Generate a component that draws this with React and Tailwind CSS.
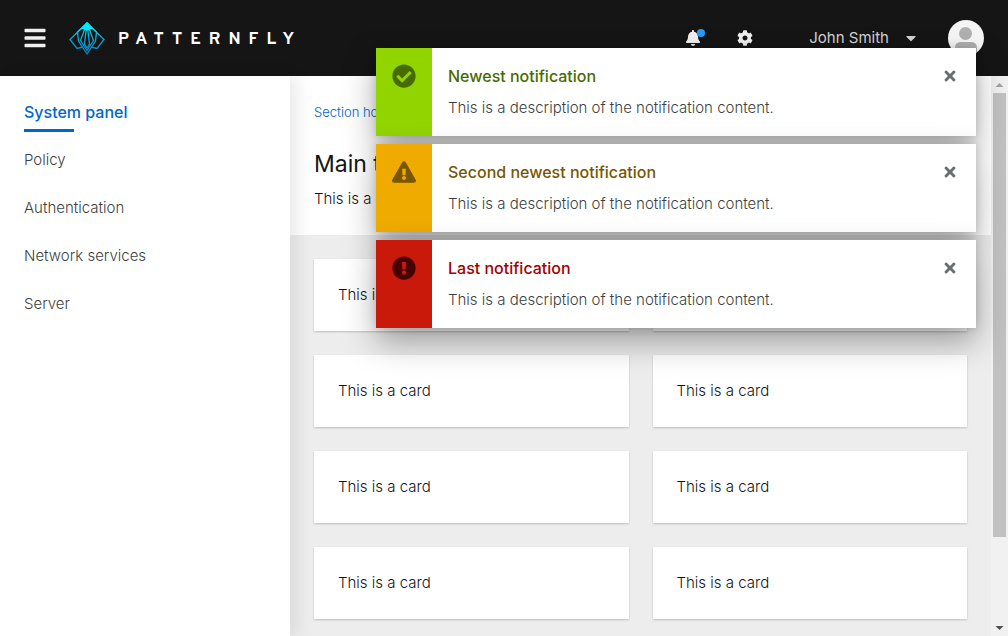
import { FaBars, FaBell, FaCog, FaCaretDown, FaCheckCircle, FaExclamationTriangle, FaExclamationCircle, FaTimes } from "react-icons/fa";

const navItems = ["Policy", "Authentication", "Network services", "Server"];
const cards = Array.from({ length: 8 }, (_, i) => i);

const alerts = [
  { title: "Newest notification", Icon: FaCheckCircle, band: "bg-[#92d400] text-[#486b00]", color: "text-[#486b00]" },
  { title: "Second newest notification", Icon: FaExclamationTriangle, band: "bg-[#f0ab00] text-[#795600]", color: "text-[#795600]" },
  { title: "Last notification", Icon: FaExclamationCircle, band: "bg-[#c9190b] text-[#470000]", color: "text-[#a30000]" },
];

function Logo() {
  return (
    <svg viewBox="0 0 36 33" className="h-[33px] w-9" fill="none" stroke="url(#logo)" strokeWidth="1.3" aria-hidden="true">
      <defs>
        <linearGradient id="logo" x1="0" y1="0" x2="0" y2="33" gradientUnits="userSpaceOnUse">
          <stop offset="0" stopColor="#00f0ff" />
          <stop offset="0.4" stopColor="#08b4dc" />
          <stop offset="1" stopColor="#0d78b8" />
        </linearGradient>
      </defs>
      <path d="M18 1 L1 17.500 L8 26.500 L14 25 M18 1 L35 17.500 L28 26.500 L22 25" />
      <path d="M18 1 L8.500 10 L9.500 19 L18 32 L26.500 19 L27.500 10 Z" />
      <path d="M18 1 L11.500 18.500 L18 28.500 L24.500 18.500 Z" />
      <path d="M18 1 L15.500 22 L18 26 L20.500 22 Z" />
      <path d="M18 0.500 L12 6.500 L18 8.500 L24 6.500 Z" fill="#00e8fa" stroke="none" />
    </svg>
  );
}

function Header() {
  return (
    <header className="flex h-[76px] shrink-0 items-center bg-[#151515] pl-[23px] pr-6 text-[#f0f0f0]">
      <button aria-label="Toggle navigation" className="mr-[22px]"><FaBars size={24} /></button>
      <a href="#home" className="flex items-center gap-[13px]">
        <Logo />
        <span className="pt-[6px] font-['Overpass','Open_Sans',sans-serif] text-[17px] font-bold tracking-[8px] text-white">PATTERNFLY</span>
      </a>
      <div className="ml-auto flex items-center">
        <button aria-label="Notifications" className="relative mr-9">
          <FaBell size={16} />
          <span className="absolute -right-1 -top-px size-2 rounded-full bg-[#2b9af3]" />
        </button>
        <button aria-label="Settings" className="mr-14"><FaCog size={16} /></button>
        <button className="mr-[29px] flex items-center gap-[14px] text-[15px] text-[#d2d2d2]">
          John Smith
          <FaCaretDown size={16} />
        </button>
        <svg viewBox="0 0 36 36" className="size-9" role="img" aria-label="User avatar">
          <defs>
            <clipPath id="avatar"><circle cx="18" cy="18" r="18" /></clipPath>
          </defs>
          <g clipPath="url(#avatar)">
            <rect width="36" height="36" fill="#f5f5f5" />
            <circle cx="17.500" cy="13.500" r="6.500" fill="#b0b0b0" />
            <path d="M7 36V28Q7 22 13 22H23Q29 22 29 28V36Z" fill="#b0b0b0" />
          </g>
        </svg>
      </div>
    </header>
  );
}

function Alert({ title, Icon, band, color }) {
  return (
    <li className="flex h-[88px] bg-white shadow-[0_14px_32px_rgba(3,3,3,0.34),0_0_8px_rgba(3,3,3,0.14)]">
      <div className={`flex w-14 shrink-0 justify-center pt-4 ${band}`}><Icon size={24} /></div>
      <div className="grow px-4 pt-4">
        <h2 className={`text-base font-medium leading-6 ${color}`}>{title}</h2>
        <p className="mt-2 text-[15px] font-light leading-6 text-[#3c3f42]">This is a description of the notification content.</p>
      </div>
      <button aria-label={`Close ${title}`} className="mr-[18px] mt-5 flex size-4 items-center justify-center text-[#6a6e73]"><FaTimes size={16} /></button>
    </li>
  );
}

export default function App() {
  return (
    <div className="relative flex h-screen flex-col overflow-hidden bg-[#ededed] font-['Inter',sans-serif] text-[#151515]">
      <Header />
      <div className="flex min-h-0 grow">
        <nav className="z-10 w-[290px] shrink-0 bg-white px-6 pt-3 text-[15px] font-light leading-6 text-[#3c3f42] shadow-[8px_0_16px_rgba(3,3,3,0.08)]">
          <a href="#system" className="relative block py-3 text-base font-medium leading-6 text-[#06c]">
            System panel
            <span className="absolute bottom-1 left-0 h-[3px] w-[50px] bg-[#06c]" />
          </a>
          {navItems.map((n) => (
            <a key={n} href="#nav" className="block py-3">{n}</a>
          ))}
        </nav>
        <main className="grow overflow-hidden text-[15px] font-light">
          <section className="h-[159px] bg-white px-6 pt-6">
            <a href="#section" className="block text-[13px] leading-6 text-[#06c]">Section home</a>
            <h1 className="mt-6 text-[23px] font-normal leading-8">Main title</h1>
            <p className="mt-[7px] leading-6">This is a demo</p>
          </section>
          <section className="grid grid-cols-2 gap-6 p-6">
            {cards.map((c) => (
              <article key={c} className="bg-white p-6 leading-6 shadow-[0_1px_2px_rgba(3,3,3,0.2)]">This is a card</article>
            ))}
          </section>
        </main>
        <div className="flex w-[17px] shrink-0 flex-col items-center bg-[#f1f1f1]" aria-hidden="true">
          <svg viewBox="0 0 17 17" className="size-[17px]"><path d="M4.500 11h8L8.500 7z" fill="#a3a3a3" /></svg>
          <div className="h-[444px] w-[13px] bg-[#c1c1c1]" />
          <svg viewBox="0 0 17 17" className="mt-auto size-[17px]"><path d="M4.500 7h8L8.500 11z" fill="#505050" /></svg>
        </div>
      </div>
      <ul className="absolute right-8 top-12 z-20 flex w-[600px] flex-col gap-2">
        {alerts.map((a) => <Alert key={a.title} {...a} />)}
      </ul>
    </div>
  );
}
